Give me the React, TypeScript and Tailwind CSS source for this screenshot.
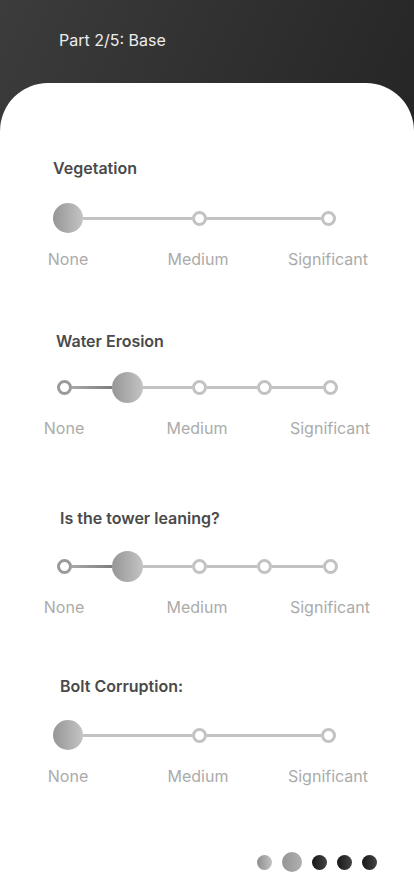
const font = { fontFamily: 'Inter, "Noto Sans", sans-serif' };

function Knob() {
  return <div className="w-[30px] h-[30px] shrink-0 rounded-full bg-gradient-to-r from-[#969696] to-[#c4c4c4]" />;
}

function Stop({ dark = false }: { dark?: boolean }) {
  return (
    <div
      className={`w-[15px] h-[15px] shrink-0 rounded-full bg-white border-[3px] ${
        dark ? 'border-[#9a9a9a]' : 'border-[#c2c2c2]'
      }`}
    />
  );
}

function Line({ w, dark = false }: { w: string; dark?: boolean }) {
  return (
    <div
      className={`h-[3px] shrink-0 ${w} ${
        dark ? 'bg-gradient-to-r from-[#a8a8a8] to-[#7e7e7e]' : 'bg-[#c2c2c2]'
      }`}
    />
  );
}

function Labels({ className }: { className: string }) {
  return (
    <div className={`flex h-[20px] items-center text-[16px] leading-[20px] text-[#ababab] ${className}`}>
      <span className="w-[100px] shrink-0 text-center">None</span>
      <span className="w-[100px] shrink-0 text-center">Medium</span>
      <span className="w-[100px] shrink-0 text-center">Significant</span>
    </div>
  );
}

function Title({ children, className }: { children: string; className: string }) {
  return (
    <div className={`h-[20px] text-[16px] leading-[20px] font-semibold text-[#4a4a4a] ${className}`}>{children}</div>
  );
}

function ThreeSlider() {
  return (
    <div className="flex h-[30px] items-center pl-[53px]">
      <Knob />
      <Line w="w-[109px]" />
      <Stop />
      <Line w="w-[114px]" />
      <Stop />
    </div>
  );
}

function FiveSlider() {
  return (
    <div className="flex h-[30px] items-center pl-[57px]">
      <Stop dark />
      <Line w="w-[40px]" dark />
      <div className="w-[31px] h-[31px] shrink-0 rounded-full bg-gradient-to-r from-[#969696] to-[#c4c4c4]" />
      <Line w="w-[49px]" />
      <Stop />
      <Line w="w-[50px]" />
      <Stop />
      <Line w="w-[51px]" />
      <Stop />
    </div>
  );
}

export default function App() {
  return (
    <div className="w-[414px] h-[896px] bg-gradient-to-br from-[#3c3c3c] to-[#161616] flex flex-col" style={font}>
      <header className="h-[83px] shrink-0 pl-[59px] pt-[30px]">
        <div className="text-[16px] leading-[20px] text-[#ececec]">Part 2/5: Base</div>
      </header>

      <main className="flex-1 bg-white rounded-t-[48px] pt-[75px]">
        <Title className="pl-[53px]">Vegetation</Title>
        <div className="mt-[25px]">
          <ThreeSlider />
        </div>
        <Labels className="mt-[16px] pl-[18px] gap-[30px]" />

        <Title className="mt-[62px] pl-[56px]">Water Erosion</Title>
        <div className="mt-[21px]">
          <FiveSlider />
        </div>
        <Labels className="mt-[16px] pl-[14px] gap-[33px]" />

        <Title className="mt-[70px] pl-[60px]">Is the tower leaning?</Title>
        <div className="mt-[23px]">
          <FiveSlider />
        </div>
        <Labels className="mt-[16px] pl-[14px] gap-[33px]" />

        <Title className="mt-[59px] pl-[60px]">Bolt Corruption:</Title>
        <div className="mt-[24px]">
          <ThreeSlider />
        </div>
        <Labels className="mt-[16px] pl-[18px] gap-[30px]" />

        <div className="mt-[66px] h-[20px] flex items-center justify-end gap-[10px] pr-[37px]">
          <div className="w-[15px] h-[15px] rounded-full bg-gradient-to-r from-[#8e8e8e] to-[#c2c2c2]" />
          <div className="w-[20px] h-[20px] rounded-full bg-gradient-to-r from-[#959595] to-[#b0b0b0]" />
          <div className="w-[15px] h-[15px] rounded-full bg-gradient-to-r from-[#181818] to-[#444444]" />
          <div className="w-[15px] h-[15px] rounded-full bg-gradient-to-r from-[#181818] to-[#444444]" />
          <div className="w-[15px] h-[15px] rounded-full bg-gradient-to-r from-[#181818] to-[#444444]" />
        </div>
      </main>
    </div>
  );
}
